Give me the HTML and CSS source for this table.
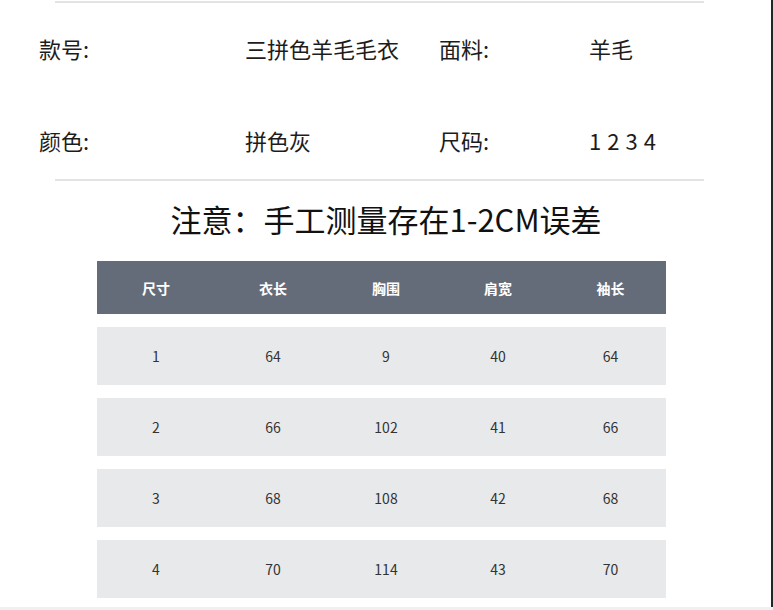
FILE: index.html
```html
<!DOCTYPE html>
<html lang="zh-CN">
<head>
<meta charset="utf-8">
<title>商品信息</title>
<link rel="stylesheet" href="styles.css">
</head>
<body>
<div class="page">
  <div class="rule"></div>
  <div class="info">
    <div class="label">款号:</div><div class="value">三拼色羊毛毛衣</div>
    <div class="label">面料:</div><div class="value">羊毛</div>
    <div class="label">颜色:</div><div class="value">拼色灰</div>
    <div class="label">尺码:</div><div class="value nums">1234</div>
  </div>
  <div class="rule"></div>
  <h1 class="title">注意：手工测量存在1-2CM误差</h1>
  <div class="table">
    <div class="row head"><span>尺寸</span><span>衣长</span><span>胸围</span><span>肩宽</span><span>袖长</span></div>
    <div class="row"><span>1</span><span>64</span><span>9</span><span>40</span><span>64</span></div>
    <div class="row"><span>2</span><span>66</span><span>102</span><span>41</span><span>66</span></div>
    <div class="row"><span>3</span><span>68</span><span>108</span><span>42</span><span>68</span></div>
    <div class="row"><span>4</span><span>70</span><span>114</span><span>43</span><span>70</span></div>
  </div>
</div>
<div class="bottom-line"></div>
</body>
</html>
```

FILE: styles.css
```css
html, body {
  margin: 0;
  padding: 0;
  background: #ffffff;
}
body {
  font-family: "Noto Sans CJK SC", "Noto Sans", sans-serif;
  color: #1c1c1c;
  width: 773px;
  height: 610px;
  overflow: hidden;
  position: relative;
}
.page {
  width: 771px;
  height: 610px;
  border-right: 2px solid #262626;
  padding-top: 1px;
  box-sizing: content-box;
}
.rule {
  height: 2px;
  background: #e3e3e3;
  margin: 0 67px 0 55px;
}
.info {
  display: grid;
  grid-template-columns: 206px 194px 150px auto;
  grid-auto-rows: 30px;
  row-gap: 62px;
  padding: 30px 0 24px 39px;
  font-size: 22px;
  line-height: 30px;
}
.nums {
  letter-spacing: 6px;
}
.title {
  margin: 18px 0 0;
  font-size: 31px;
  line-height: 40px;
  font-weight: 400;
  text-align: center;
  color: #111;
  padding-left: 1px;
}
.table {
  margin: 22px 0 0 97px;
  width: 569px;
  display: flex;
  flex-direction: column;
  gap: 13px;
}
.row {
  display: grid;
  grid-template-columns: 118px 116px 110px 114px 111px;
  height: 58px;
  align-items: center;
  background: #e8e9eb;
  font-size: 14px;
  color: #333;
}
.row span {
  text-align: center;
}
.row.head {
  height: 53px;
  background: #656c79;
  color: #ffffff;
  font-weight: 700;
}
.bottom-line {
  position: absolute;
  left: 0;
  right: 0;
  bottom: 0;
  height: 3px;
  background: #f0f0f0;
}
```
